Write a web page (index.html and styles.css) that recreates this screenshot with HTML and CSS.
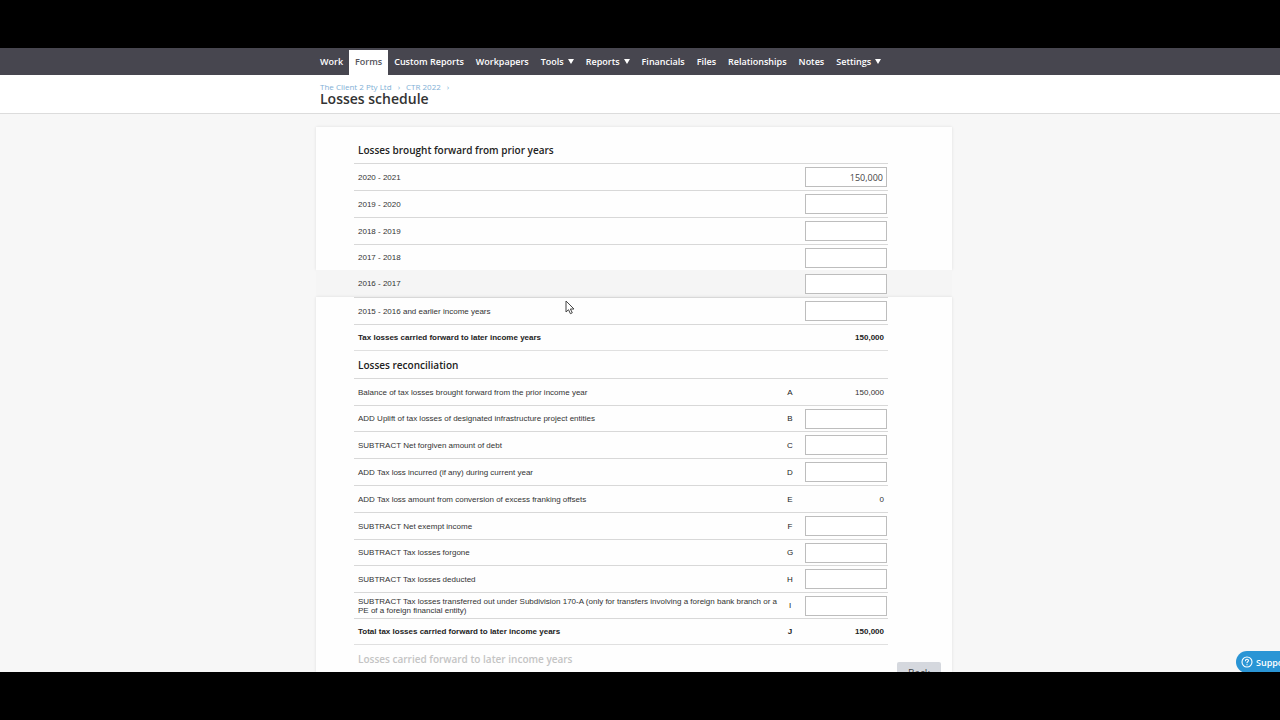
FILE: index.html
```html
<!DOCTYPE html>
<html lang="en">
<head>
<meta charset="utf-8">
<title>Losses schedule</title>
<link rel="stylesheet" href="styles.css">
</head>
<body>
<div class="screen">
  <nav class="nav">
    <div class="container nav-list">
      <a class="nav-item" href="#">Work</a>
      <a class="nav-item active" href="#">Forms</a>
      <a class="nav-item" href="#">Custom Reports</a>
      <a class="nav-item" href="#">Workpapers</a>
      <a class="nav-item more" href="#">Tools</a>
      <a class="nav-item more" href="#">Reports</a>
      <a class="nav-item" href="#">Financials</a>
      <a class="nav-item" href="#">Files</a>
      <a class="nav-item" href="#">Relationships</a>
      <a class="nav-item" href="#">Notes</a>
      <a class="nav-item more" href="#">Settings</a>
    </div>
  </nav>
  <header class="titlebar">
    <div class="container">
      <div class="crumbs"><a href="#">The Client 2 Pty Ltd</a><span>›</span><a href="#">CTR 2022</a><span>›</span></div>
      <h1 class="title">Losses schedule</h1>
    </div>
  </header>
  <main class="main">
    <section class="card first">
      <h2 class="heading">Losses brought forward from prior years</h2>
      <table class="grid">
        <tr><td><label for="y21">2020 - 2021</label></td><td class="code"></td><td class="value"><input id="y21" class="field" value="150,000"></td></tr>
        <tr><td><label for="y20">2019 - 2020</label></td><td class="code"></td><td class="value"><input id="y20" class="field"></td></tr>
        <tr><td><label for="y19">2018 - 2019</label></td><td class="code"></td><td class="value"><input id="y19" class="field"></td></tr>
        <tr class="short"><td><label for="y18">2017 - 2018</label></td><td class="code"></td><td class="value"><input id="y18" class="field"></td></tr>
      </table>
    </section>
    <section class="band">
      <table class="grid">
        <tr><td><label for="y17">2016 - 2017</label></td><td class="code"></td><td class="value"><input id="y17" class="field"></td></tr>
      </table>
    </section>
    <section class="card">
      <table class="grid">
        <tr><td><label for="y16">2015 - 2016 and earlier income years</label></td><td class="code"></td><td class="value"><input id="y16" class="field"></td></tr>
        <tr class="total"><td>Tax losses carried forward to later income years</td><td class="code"></td><td class="value">150,000</td></tr>
      </table>
      <h2 class="heading">Losses reconciliation</h2>
      <table class="grid">
        <tr><td>Balance of tax losses brought forward from the prior income year</td><td class="code">A</td><td class="value">150,000</td></tr>
        <tr class="short"><td><label for="b">ADD Uplift of tax losses of designated infrastructure project entities</label></td><td class="code">B</td><td class="value"><input id="b" class="field"></td></tr>
        <tr><td><label for="c">SUBTRACT Net forgiven amount of debt</label></td><td class="code">C</td><td class="value"><input id="c" class="field"></td></tr>
        <tr><td><label for="d">ADD Tax loss incurred (if any) during current year</label></td><td class="code">D</td><td class="value"><input id="d" class="field"></td></tr>
        <tr><td>ADD Tax loss amount from conversion of excess franking offsets</td><td class="code">E</td><td class="value">0</td></tr>
        <tr><td><label for="f">SUBTRACT Net exempt income</label></td><td class="code">F</td><td class="value"><input id="f" class="field"></td></tr>
        <tr class="short"><td><label for="g">SUBTRACT Tax losses forgone</label></td><td class="code">G</td><td class="value"><input id="g" class="field"></td></tr>
        <tr><td><label for="h">SUBTRACT Tax losses deducted</label></td><td class="code">H</td><td class="value"><input id="h" class="field"></td></tr>
        <tr class="short"><td><label for="i">SUBTRACT Tax losses transferred out under Subdivision 170-A (only for transfers involving a foreign bank branch or a PE of a foreign financial entity)</label></td><td class="code">I</td><td class="value"><input id="i" class="field"></td></tr>
        <tr class="total"><td>Total tax losses carried forward to later income years</td><td class="code">J</td><td class="value">150,000</td></tr>
      </table>
      <h2 class="heading faded">Losses carried forward to later income years</h2>
    </section>
    <button class="back" type="button">Back</button>
  </main>
  <button class="support" type="button">
    <svg width="12" height="12" viewBox="0 0 12 12" fill="none" stroke="#fff" stroke-width="1.1" stroke-linecap="round"><circle cx="6" cy="6" r="5"/><path d="M4.5 4.8c0-2 3-2 3-.2 0 1.100-1.500 1.100-1.500 2.200"/><path d="M6 8.600v.1"/></svg>
    Support
  </button>
  <svg class="cursor" width="10" height="15" viewBox="0 0 10 15"><path d="M1 1v11l2.500-2.300 1.900 4 1.900-.9-1.900-3.800H9z" fill="#fff" stroke="#444" stroke-width="1"/></svg>
</div>
</body>
</html>
```
FILE: styles.css
```css
* { box-sizing: border-box; }
body {
  margin: 0;
  height: 100vh;
  padding: 48px 0;
  background: #000;
  color: #333;
  font-family: "Liberation Sans", Arial, sans-serif;
  font-size: 8px;
  line-height: 9px;
  overflow: hidden;
}
.screen {
  position: relative;
  height: 100%;
  overflow: hidden;
  background: #f7f7f7;
}
.container {
  max-width: 640px;
  margin: 0 auto;
}
.nav, .titlebar, .heading, .field, .support, .back {
  font-family: "Open Sans", "Noto Sans", sans-serif;
}
.nav {
  background: #47464f;
  padding-top: 2px;
}
.nav-list {
  display: flex;
}
.nav-item {
  padding: 0 6px 1px;
  color: #fff;
  font-size: 9px;
  font-weight: 600;
  line-height: 24px;
  text-decoration: none;
  white-space: nowrap;
}
.nav-item:first-child { padding-left: 0; }
.nav-item.active {
  background: #fff;
  color: #55545c;
}
.nav-item.more::after {
  content: "";
  display: inline-block;
  margin-left: 4px;
  vertical-align: 1px;
  border: 3px solid transparent;
  border-top: 5px solid #fff;
  border-bottom: 0;
}
.titlebar {
  padding: 7px 0;
  background: #fff;
  border-bottom: 1px solid #dcdcdc;
}
.crumbs {
  display: flex;
  gap: 6px;
  color: #7fb0d6;
  font-size: 8px;
  line-height: 10px;
}
.crumbs a {
  color: #7fb0d6;
  text-decoration: none;
}
.title {
  margin: 0;
  color: #333;
  font-size: 14px;
  font-weight: 600;
  line-height: 14px;
}
.main {
  position: relative;
  max-width: 648px;
  margin: 0 auto;
  padding: 13px 12px 0 0;
}
.card, .band {
  padding: 0 64px 0 38px;
}
.card {
  background: #fefefe;
  box-shadow: 0 0 3px rgba(0, 0, 0, .1);
}
.card.first { padding-top: 9px; }
.band { background: #f5f5f5; }
.heading {
  margin: 0;
  padding: 1px 0 0 4px;
  color: #222;
  font-size: 10px;
  font-weight: 600;
  line-height: 26px;
}
.heading.faded { color: #c4c4c4; }
.grid {
  width: 100%;
  border-collapse: separate;
  border-spacing: 0;
  table-layout: fixed;
}
.grid td {
  height: 27px;
  padding: 0 0 0 4px;
  vertical-align: middle;
}
.card .grid td { border-top: 1px solid #d8d8d8; }
.card .total td { border-bottom: 1px solid #e0e0e0; }
.grid .short td { height: 26px; }
.grid .code {
  width: 24px;
  padding: 0 4px 0 0;
  text-align: center;
  color: #222;
}
.grid .value {
  width: 84px;
  padding: 0 4px 0 0;
  text-align: right;
}
.grid .total td {
  color: #222;
  font-weight: 700;
}
.field {
  display: block;
  width: 82px;
  height: 20px;
  margin-left: 1px;
  padding: 0 3px;
  border: 1px solid #bdbdbd;
  background: #fff;
  color: #444;
  font-size: 9px;
  text-align: right;
}
.back {
  position: absolute;
  right: 23px;
  bottom: -12px;
  width: 44px;
  height: 22px;
  padding: 0;
  border: 0;
  border-radius: 2px;
  background: #d5d8de;
  color: #444;
  font-size: 10px;
}
.support {
  position: absolute;
  right: -20px;
  bottom: -1px;
  display: flex;
  align-items: center;
  gap: 3px;
  width: 64px;
  height: 22px;
  padding: 0 5px;
  border: 0;
  border-radius: 11px;
  background: #2a95d5;
  color: #fff;
  font-size: 9px;
  font-weight: 600;
}
.cursor {
  position: absolute;
  left: 565px;
  top: 252px;
}
```
